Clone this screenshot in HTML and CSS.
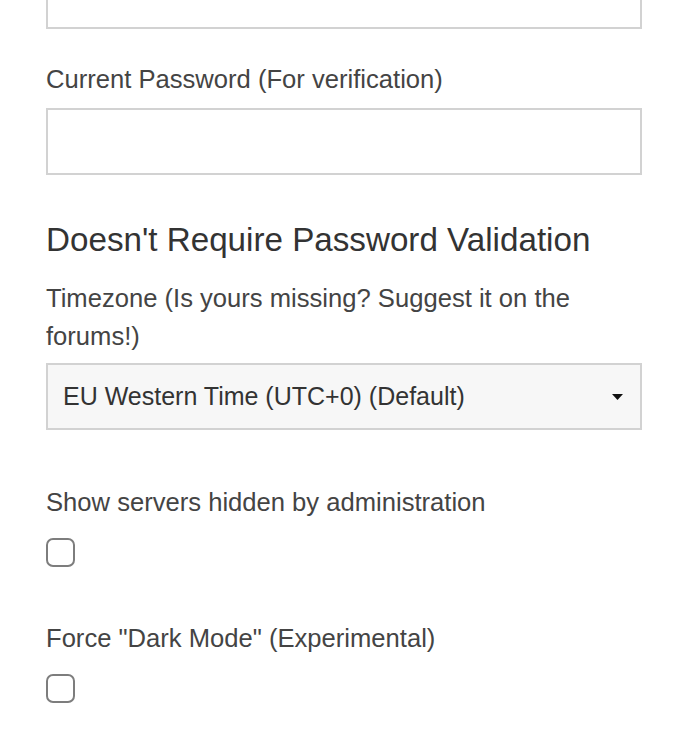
FILE: index.html
```html
<!DOCTYPE html>
<html lang="en">
<head>
<meta charset="utf-8">
<title>Settings</title>
<link rel="stylesheet" href="styles.css">
</head>
<body>
<main class="form">
  <div class="field">
    <div class="input"></div>
  </div>
  <div class="field field-pw">
    <label class="label">Current Password (For verification)</label>
    <div class="input"></div>
  </div>
  <h2 class="heading">Doesn't Require Password Validation</h2>
  <div class="field field-tz">
    <label class="label">Timezone (Is yours missing? Suggest it on the forums!)</label>
    <div class="select">
      <span class="select-text">EU Western Time (UTC+0) (Default)</span>
      <svg class="caret" width="11" height="6" viewBox="0 0 11 6"><path d="M0 0H11L5.5 6Z" fill="#111"/></svg>
    </div>
  </div>
  <div class="field field-check">
    <label class="label">Show servers hidden by administration</label>
    <div class="checkbox"></div>
  </div>
  <div class="field field-check">
    <label class="label">Force "Dark Mode" (Experimental)</label>
    <div class="checkbox"></div>
  </div>
</main>
</body>
</html>
```

FILE: styles.css
```css
html, body {
  margin: 0;
  padding: 0;
  background: #ffffff;
}
body {
  font-family: "Liberation Sans", Arial, Helvetica, sans-serif;
  color: #444;
  overflow: hidden;
}
.form {
  width: 596px;
  padding: 0 0 0 46px;
  margin-top: -38px;
}
.field {
  display: flex;
  flex-direction: column;
}
.label {
  display: block;
  font-size: 25.6px;
  line-height: 38px;
  color: #444;
}
.input {
  height: 67px;
  box-sizing: border-box;
  border: 2px solid #d2d2d2;
  background: #fff;
}
.field-pw {
  margin-top: 31px;
}
.field-pw .label {
  margin-bottom: 10px;
}
.heading {
  margin: 45px 0 0;
  font-size: 33.2px;
  line-height: 40px;
  font-weight: normal;
  color: #333;
}
.field-tz {
  margin-top: 19px;
}
.field-tz .label {
  margin-bottom: 8px;
}
.select {
  height: 67px;
  box-sizing: border-box;
  border: 2px solid #d2d2d2;
  background: #f7f7f7;
  display: flex;
  align-items: center;
  justify-content: space-between;
  padding: 0 17px 0 15px;
}
.select-text {
  font-size: 25px;
  color: #333;
}
.caret {
  display: block;
}
.field-check {
  margin-top: 53px;
}
.field-check + .field-check {
  margin-top: 52px;
}
.field-check .label {
  margin-bottom: 17px;
}
.checkbox {
  width: 29px;
  height: 29px;
  box-sizing: border-box;
  border: 2px solid #7d7d7d;
  border-radius: 7px;
  background: #fff;
}
```
